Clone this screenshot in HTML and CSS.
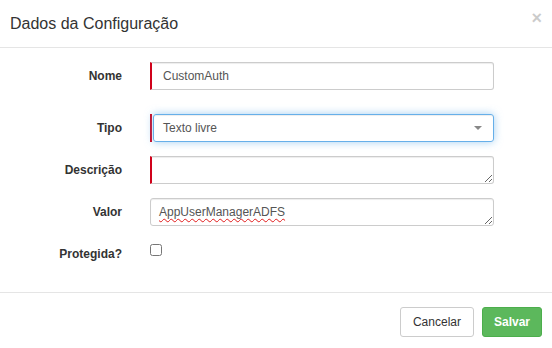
FILE: index.html
```html
<!DOCTYPE html>
<html lang="pt">
<head>
<meta charset="utf-8">
<title>Dados da Configuração</title>
<link rel="stylesheet" href="styles.css">
</head>
<body>
<div class="modal">
  <div class="modal-header">
    <h4 class="modal-title">Dados da Configuração</h4>
    <button class="close" type="button">×</button>
  </div>
  <div class="modal-body">
    <div class="form-row row-first">
      <label class="ctl-label">Nome</label>
      <input class="ctrl req" type="text" value="CustomAuth">
    </div>
    <div class="form-row">
      <label class="ctl-label">Tipo</label>
      <div class="select-wrap">
        <div class="select"><span>Texto livre</span><b class="arrow"></b></div>
      </div>
    </div>
    <div class="form-row">
      <label class="ctl-label">Descrição</label>
      <textarea class="ctrl area req" spellcheck="false"></textarea>
    </div>
    <div class="form-row">
      <label class="ctl-label">Valor</label>
      <textarea class="ctrl area squig" spellcheck="false">AppUserManagerADFS</textarea>
    </div>
    <div class="form-row row-last">
      <label class="ctl-label">Protegida?</label>
      <div class="check-cell"><input class="check" type="checkbox"></div>
    </div>
  </div>
  <div class="modal-footer">
    <button class="btn btn-default" type="button">Cancelar</button>
    <button class="btn btn-success" type="button">Salvar</button>
  </div>
</div>
</body>
</html>
```

FILE: styles.css
```css
html, body {
  margin: 0;
  padding: 0;
  overflow: hidden;
  background: #fff;
}
body {
  font-family: "Liberation Sans", Arial, sans-serif;
  color: #333;
}
.modal {
  width: 552px;
}
.modal-header {
  box-sizing: border-box;
  height: 48px;
  padding: 12px 10px 0 10px;
  border-bottom: 1px solid #e5e5e5;
  display: flex;
  justify-content: space-between;
  align-items: flex-start;
}
.modal-title {
  margin: 0;
  font-size: 16px;
  font-weight: normal;
  line-height: 23px;
  color: #333;
}
.close {
  border: 0;
  background: none;
  padding: 0;
  margin-top: 0;
  font-family: "Liberation Sans", Arial, sans-serif;
  font-size: 18px;
  font-weight: bold;
  line-height: 12px;
  color: #000;
  opacity: .2;
}
.modal-body {
  padding: 14px 58px 24px 10px;
}
.form-row {
  display: grid;
  grid-template-columns: 112px 344px;
  column-gap: 28px;
  align-items: center;
  margin-bottom: 14px;
}
.row-first {
  margin-bottom: 24px;
}
.row-last {
  margin-bottom: 0;
  align-items: start;
}
.ctl-label {
  text-align: right;
  font-size: 12px;
  font-weight: bold;
  line-height: 28px;
  color: #333;
}
.ctrl {
  box-sizing: border-box;
  display: block;
  width: 344px;
  height: 28px;
  margin: 0;
  border: 1px solid #ccc;
  border-radius: 3px;
  padding: 0 10px;
  font-family: "Liberation Sans", Arial, sans-serif;
  font-size: 12px;
  color: #555;
  background: #fff;
  box-shadow: inset 0 1px 1px rgba(0, 0, 0, .075);
  outline: none;
}
.req {
  border-left: 2px solid #d0021b;
  border-top-left-radius: 0;
  border-bottom-left-radius: 0;
  padding-left: 11px;
}
.area {
  padding: 6px 8px;
  line-height: 15px;
  resize: vertical;
  overflow: hidden;
}
.area.req {
  padding-left: 11px;
}
.squig {
  text-decoration: underline wavy #e21b1b;
  text-decoration-thickness: 1px;
  text-underline-offset: 2px;
}
.select-wrap {
  box-sizing: border-box;
  height: 28px;
  border-left: 2px solid #d0021b;
  padding-left: 1px;
}
.select {
  box-sizing: border-box;
  position: relative;
  height: 28px;
  border: 1px solid #66afe9;
  border-radius: 3px;
  padding: 0 9px;
  display: flex;
  align-items: center;
  font-size: 12px;
  color: #555;
  box-shadow: inset 0 1px 1px rgba(0, 0, 0, .075), 0 0 8px rgba(102, 175, 233, .6);
}
.arrow {
  position: absolute;
  right: 11px;
  top: 11px;
  width: 0;
  height: 0;
  border-left: 4px solid transparent;
  border-right: 4px solid transparent;
  border-top: 4px solid #888;
}
.check-cell {
  height: 28px;
}
.check {
  display: block;
  width: 12px;
  height: 12px;
  margin: 4px 0 0 0;
}
.modal-footer {
  border-top: 1px solid #e5e5e5;
  padding: 14px 10px 15px;
  display: flex;
  justify-content: flex-end;
  gap: 8px;
}
.btn {
  box-sizing: border-box;
  height: 30px;
  padding: 0 12px;
  border: 1px solid;
  border-radius: 3px;
  font-family: "Liberation Sans", Arial, sans-serif;
  font-size: 12px;
  line-height: 28px;
}
.btn-default {
  background: #fff;
  border-color: #ccc;
  color: #333;
}
.btn-success {
  background: #5cb85c;
  border-color: #4cae4c;
  color: #fff;
  font-weight: bold;
  padding: 0 11px;
}
```
